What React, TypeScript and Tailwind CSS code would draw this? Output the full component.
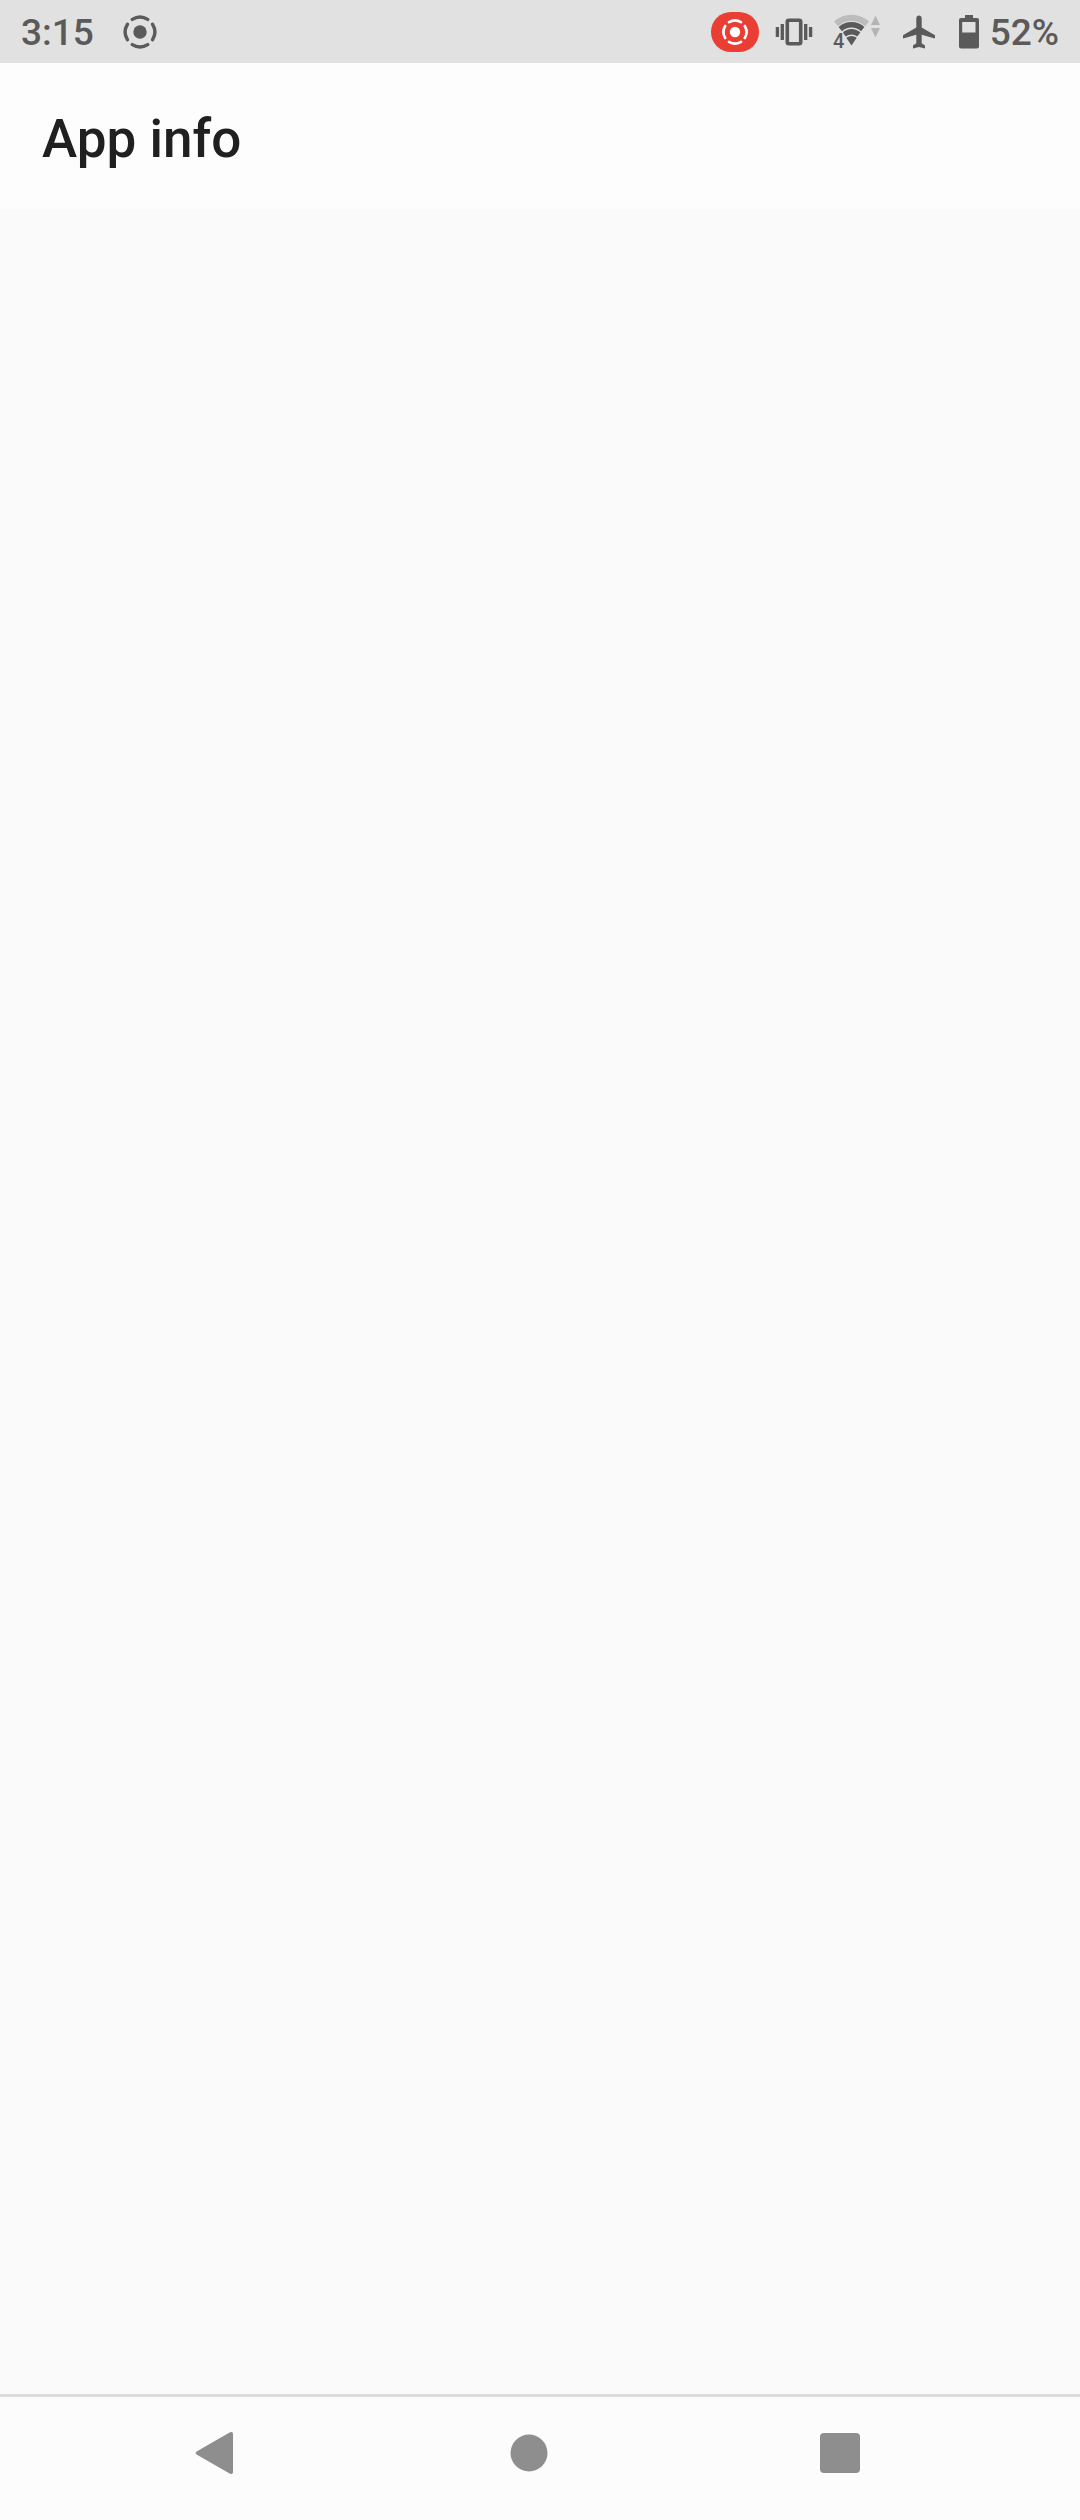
import type { ReactNode } from 'react';

const RecordIcon = ({ className }: { className: string }) => (
  <svg viewBox="0 0 36 36" className={className} fill="none" aria-hidden="true">
    <circle cx="18" cy="18" r="6.7" fill="currentColor" />
    <g stroke="currentColor" strokeWidth="3.4" strokeLinecap="round">
      <path d="M10.3 5.4A14.8 14.8 0 0 1 25.7 5.4" />
      <path d="M30.6 10.3A14.8 14.8 0 0 1 30.6 25.7" />
      <path d="M25.7 30.6A14.8 14.8 0 0 1 10.3 30.6" />
      <path d="M5.4 25.7A14.8 14.8 0 0 1 5.4 10.3" />
    </g>
  </svg>
);

const VibrateIcon = () => (
  <svg viewBox="0 0 38 28" className="w-[38px] h-7" fill="none" aria-hidden="true">
    <rect x="12.3" y="2.3" width="13.4" height="23.4" rx="1.5" stroke="currentColor" strokeWidth="3.6" />
    <g stroke="currentColor" strokeWidth="3.3">
      <path d="M2.4 9v10M7.3 6v16M30.7 6v16M35.6 9v10" />
    </g>
  </svg>
);

const WifiIcon = () => (
  <svg viewBox="0 0 48 38" className="w-12 h-[38px] overflow-visible" aria-hidden="true">
    <path d="M1 8.5A26 26 0 0 1 36 8.5L32 13.2A20 20 0 0 0 5 13.2Z" fill="#bcbcbc" />
    <path d="M5.6 14A19 19 0 0 1 31.4 14L28 18.3A14 14 0 0 0 9 18.3Z" fill="currentColor" />
    <path d="M9.6 19.4A13 13 0 0 1 27.4 19.4L24.2 23.6A9 9 0 0 0 12.8 23.6Z" fill="currentColor" />
    <path d="M13.3 24.8A8 8 0 0 1 23.7 24.8L18.5 32.5Z" fill="currentColor" />
    <path d="M38 12L42.5 2.5L47 12ZM38 15L42.5 24.5L47 15Z" fill="#b4b4b4" />
    <text
      x="0"
      y="35"
      fontSize="20"
      fontWeight="500"
      fill="currentColor"
      stroke="#e1e1e1"
      strokeWidth="2"
      paintOrder="stroke"
    >
      4
    </text>
  </svg>
);

const AirplaneIcon = () => (
  <svg viewBox="0 0 32 34" className="w-8 h-[34px]" fill="currentColor" aria-hidden="true">
    <path d="M16 0.5C17.6 0.5 18.7 1.7 18.7 3.2V12.5L32 20.3V23.6L18.7 19.8V28.3L22 30.6V33.5L16 32L10 33.5V30.6L13.3 28.3V19.8L0 23.6V20.3L13.3 12.5V3.2C13.3 1.7 14.4 0.5 16 0.5Z" />
  </svg>
);

const BatteryIcon = () => (
  <svg viewBox="0 0 20 34" className="w-5 h-[34px]" aria-hidden="true">
    <path
      d="M6 0H14V3H18Q20 3 20 5V31.5Q20 33.5 18 33.5H2Q0 33.5 0 31.5V5Q0 3 2 3H6Z"
      fill="currentColor"
    />
    <path d="M3.2 7H16.5V17.5H3.2Z" fill="#e1e1e1" />
  </svg>
);

const navItems: { label: string; shape: ReactNode }[] = [
  {
    label: 'Back',
    shape: <path d="M24 38.2Q21.3 40 24 41.8L57 60.7Q60 62 60 59V21Q60 18 57 19.3Z" />,
  },
  { label: 'Home', shape: <circle cx="42" cy="40" r="18.5" /> },
  { label: 'Recent apps', shape: <rect x="20" y="20" width="40" height="40" rx="4" /> },
];

export default function App() {
  return (
    <div className="flex flex-col min-h-screen bg-[#fafafa] font-[Roboto,sans-serif]">
      <div className="flex items-center justify-between h-[63px] px-[21px] bg-[#e1e1e1] text-[#5a5a5a] text-[37px] leading-10 font-medium">
        <div className="flex items-center gap-7">
          <time className="pt-0.5">3:15</time>
          <RecordIcon className="w-9 h-9" />
        </div>
        <div className="flex items-center">
          <span className="flex items-center justify-center w-12 h-10 mr-4 rounded-[20px] bg-[#ea3d33] text-white">
            <RecordIcon className="w-7 h-7" />
          </span>
          <span className="mr-5">
            <VibrateIcon />
          </span>
          <span className="mr-[22px]">
            <WifiIcon />
          </span>
          <span className="mr-6">
            <AirplaneIcon />
          </span>
          <span className="mr-[11px]">
            <BatteryIcon />
          </span>
          <span className="pt-0.5">52%</span>
        </div>
      </div>

      <header className="flex items-center h-[146px] px-[42px] pt-1.5 bg-[#fdfdfd]">
        <h1 className="text-[53px] leading-16 font-medium text-[#202020]">App info</h1>
      </header>

      <main className="grow" />

      <nav className="flex items-center justify-between h-[126px] pl-[16%] pr-[18.5%] pb-3 border-t-3 border-[#dcdcdc] bg-[#fcfcfc]">
        {navItems.map((item) => (
          <button key={item.label} type="button" aria-label={item.label} className="text-[#8e8e8e]">
            <svg viewBox="0 0 80 80" className="w-20 h-20" fill="currentColor">
              {item.shape}
            </svg>
          </button>
        ))}
      </nav>
    </div>
  );
}
